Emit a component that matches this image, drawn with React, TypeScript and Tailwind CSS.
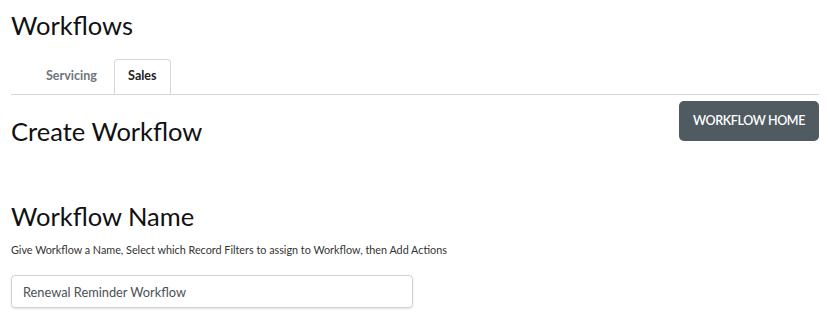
export default function App() {
  return (
    <div className="min-h-screen bg-white text-[#111] font-['Lato','Noto_Sans',sans-serif] px-[11px] pt-[8px]">
      <h1 className="text-[25.5px] leading-[34px] font-normal">Workflows</h1>

      <div className="mt-[17px] flex border-b border-[#d3d7db] text-[12.5px] font-bold">
        <div className="h-[35px] pl-[35px] pr-[17px] flex items-center text-[#6c757d]">Servicing</div>
        <div className="w-[57px] h-[35px] -mb-px flex items-center justify-center border border-b-white border-[#d3d7db] rounded-t-[4px] bg-white text-[#222]">
          Sales
        </div>
      </div>

      <div className="flex items-start justify-between pt-[6px]">
        <h2 className="mt-[13px] text-[25.5px] leading-[34px] font-normal">Create Workflow</h2>
        <button className="h-[40px] w-[140px] rounded-[5px] bg-[#4f5a61] text-white text-[12.5px] font-semibold tracking-[-0.03em]">
          WORKFLOW HOME
        </button>
      </div>

      <h2 className="mt-[51px] text-[25.5px] leading-[34px] font-normal">Workflow Name</h2>
      <p className="mt-[9px] text-[10.8px] text-[#333]">
        Give Workflow a Name, Select which Record Filters to assign to Workflow, then Add Actions
      </p>
      <input
        className="mt-[17px] w-[402px] h-[33px] px-[11px] rounded-[4px] border border-[#ced4da] shadow-[0_1px_2px_rgba(0,0,0,0.12)] text-[12.8px] text-[#495057] outline-none"
        defaultValue="Renewal Reminder Workflow"
      />
    </div>
  )
}
